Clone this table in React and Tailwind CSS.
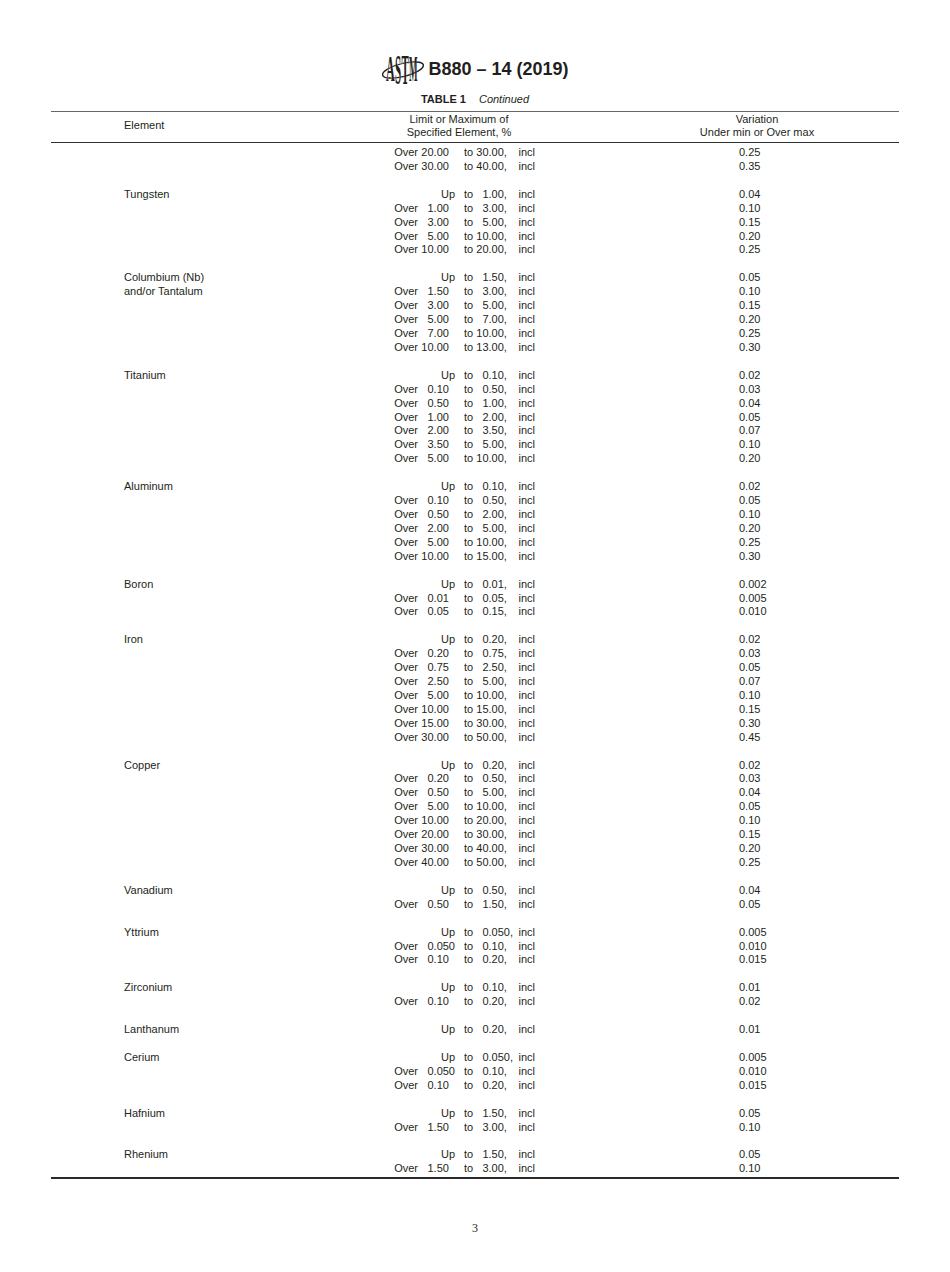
import React from "react";

const FIG = "\u2007";

// pad a number so decimals line up: single-digit integer gets a leading
// figure space, two-decimal values get a trailing one
const pad = (n, comma = false) => {
  const [i, d] = n.split(".");
  const lead = i.length === 1 ? FIG : "";
  const trail = d.length === 2 ? FIG : "";
  return `${lead}${n}${comma ? "," : ""}${trail}`;
};

const groups = [
  {
    el: [],
    rows: [
      ["o", "20.00", "30.00", "0.25"],
      ["o", "30.00", "40.00", "0.35"],
    ],
  },
  {
    el: ["Tungsten"],
    rows: [
      ["u", null, "1.00", "0.04"],
      ["o", "1.00", "3.00", "0.10"],
      ["o", "3.00", "5.00", "0.15"],
      ["o", "5.00", "10.00", "0.20"],
      ["o", "10.00", "20.00", "0.25"],
    ],
  },
  {
    el: ["Columbium (Nb)", "and/or Tantalum"],
    rows: [
      ["u", null, "1.50", "0.05"],
      ["o", "1.50", "3.00", "0.10"],
      ["o", "3.00", "5.00", "0.15"],
      ["o", "5.00", "7.00", "0.20"],
      ["o", "7.00", "10.00", "0.25"],
      ["o", "10.00", "13.00", "0.30"],
    ],
  },
  {
    el: ["Titanium"],
    rows: [
      ["u", null, "0.10", "0.02"],
      ["o", "0.10", "0.50", "0.03"],
      ["o", "0.50", "1.00", "0.04"],
      ["o", "1.00", "2.00", "0.05"],
      ["o", "2.00", "3.50", "0.07"],
      ["o", "3.50", "5.00", "0.10"],
      ["o", "5.00", "10.00", "0.20"],
    ],
  },
  {
    el: ["Aluminum"],
    rows: [
      ["u", null, "0.10", "0.02"],
      ["o", "0.10", "0.50", "0.05"],
      ["o", "0.50", "2.00", "0.10"],
      ["o", "2.00", "5.00", "0.20"],
      ["o", "5.00", "10.00", "0.25"],
      ["o", "10.00", "15.00", "0.30"],
    ],
  },
  {
    el: ["Boron"],
    rows: [
      ["u", null, "0.01", "0.002"],
      ["o", "0.01", "0.05", "0.005"],
      ["o", "0.05", "0.15", "0.010"],
    ],
  },
  {
    el: ["Iron"],
    rows: [
      ["u", null, "0.20", "0.02"],
      ["o", "0.20", "0.75", "0.03"],
      ["o", "0.75", "2.50", "0.05"],
      ["o", "2.50", "5.00", "0.07"],
      ["o", "5.00", "10.00", "0.10"],
      ["o", "10.00", "15.00", "0.15"],
      ["o", "15.00", "30.00", "0.30"],
      ["o", "30.00", "50.00", "0.45"],
    ],
  },
  {
    el: ["Copper"],
    rows: [
      ["u", null, "0.20", "0.02"],
      ["o", "0.20", "0.50", "0.03"],
      ["o", "0.50", "5.00", "0.04"],
      ["o", "5.00", "10.00", "0.05"],
      ["o", "10.00", "20.00", "0.10"],
      ["o", "20.00", "30.00", "0.15"],
      ["o", "30.00", "40.00", "0.20"],
      ["o", "40.00", "50.00", "0.25"],
    ],
  },
  {
    el: ["Vanadium"],
    rows: [
      ["u", null, "0.50", "0.04"],
      ["o", "0.50", "1.50", "0.05"],
    ],
  },
  {
    el: ["Yttrium"],
    rows: [
      ["u", null, "0.050", "0.005"],
      ["o", "0.050", "0.10", "0.010"],
      ["o", "0.10", "0.20", "0.015"],
    ],
  },
  {
    el: ["Zirconium"],
    rows: [
      ["u", null, "0.10", "0.01"],
      ["o", "0.10", "0.20", "0.02"],
    ],
  },
  {
    el: ["Lanthanum"],
    rows: [["u", null, "0.20", "0.01"]],
  },
  {
    el: ["Cerium"],
    rows: [
      ["u", null, "0.050", "0.005"],
      ["o", "0.050", "0.10", "0.010"],
      ["o", "0.10", "0.20", "0.015"],
    ],
  },
  {
    el: ["Hafnium"],
    rows: [
      ["u", null, "1.50", "0.05"],
      ["o", "1.50", "3.00", "0.10"],
    ],
  },
  {
    el: ["Rhenium"],
    rows: [
      ["u", null, "1.50", "0.05"],
      ["o", "1.50", "3.00", "0.10"],
    ],
  },
];

// tall condensed serif letters inside a tilted orbit ring
const AstmLogo = () => (
  <svg
    width="44"
    height="36"
    viewBox="0 0 44 36"
    fill="none"
    overflow="visible"
    className="overflow-visible"
  >
    <ellipse
      cx="22"
      cy="19"
      rx="21"
      ry="6.5"
      transform="rotate(-14 22 19)"
      stroke="#231f20"
      strokeWidth="1.4"
    />
    <g
      fill="#231f20"
      stroke="#fff"
      strokeWidth="0.5"
      paintOrder="stroke"
      fontFamily="'Liberation Serif', serif"
      fontWeight="700"
      fontSize="20"
    >
      <text transform="translate(5 30) scale(0.6 1.75)">A</text>
      <text transform="translate(14 33) scale(0.55 2.15)">S</text>
      <text transform="translate(20.5 33) scale(0.55 2.15)">T</text>
      <text transform="translate(28 30) scale(0.45 1.75)">M</text>
    </g>
  </svg>
);

const Limit = ({ kind, from, to }) => (
  <div className="grid grid-cols-[35px_37px_58px_22px] whitespace-pre">
    {kind === "u" ? (
      <span className="col-span-2 text-right">Up</span>
    ) : (
      <>
        <span className="text-right">Over</span>
        <span className="text-right">{pad(from)}</span>
      </>
    )}
    <span className="text-right">{`to ${pad(to, true)}`}</span>
    <span className="text-right">incl</span>
  </div>
);

const Row = ({ el, row }) => (
  <div className="grid grid-cols-[332px_152px_80px_284px] h-[13.93px] leading-[13.93px]">
    <span className="pl-[73px]">{el}</span>
    <Limit kind={row[0]} from={row[1]} to={row[2]} />
    <span />
    <span className="pl-[124px]">{row[3]}</span>
  </div>
);

export default function App() {
  return (
    <div
      className="w-[950px] min-h-[1272px] bg-white text-[#231f20] text-[11px]"
      style={{ fontFamily: "'Liberation Sans', Arial, sans-serif" }}
    >
      <div className="flex items-center justify-center gap-[3px] pt-[51px]">
        <AstmLogo />
        <span className="text-[18px] font-bold leading-[36px]">
          B880 – 14 (2019)
        </span>
      </div>

      <div className="mt-[6px] flex justify-center gap-[13px] leading-[13px] text-[11px]">
        <span className="font-bold">TABLE 1</span>
        <span className="italic">Continued</span>
      </div>

      <div className="mx-[51px] mt-[5px]">
        <div className="grid grid-cols-[332px_152px_80px_284px] items-center h-[32px] pb-[3px] border-t border-b border-t-[#666] border-b-[#333] leading-[13px]">
          <span className="pl-[73px]">Element</span>
          <span className="text-center">
            Limit or Maximum of
            <br />
            Specified Element, %
          </span>
          <span />
          <span className="text-center">
            Variation
            <br />
            Under min or Over max
          </span>
        </div>

        <div className="pt-[3px] pb-[1px] border-b-2 border-[#2a2a2a]">
          {groups.map((g, gi) => (
            <div key={gi}>
              {gi > 0 && <div className="h-[13.93px]" />}
              {g.rows.map((row, ri) => (
                <Row key={ri} el={g.el[ri] || ""} row={row} />
              ))}
            </div>
          ))}
        </div>
      </div>

      <div
        className="mt-[40px] text-center text-[12px]"
        style={{ fontFamily: "'Liberation Serif', serif" }}
      >
        3
      </div>
    </div>
  );
}
